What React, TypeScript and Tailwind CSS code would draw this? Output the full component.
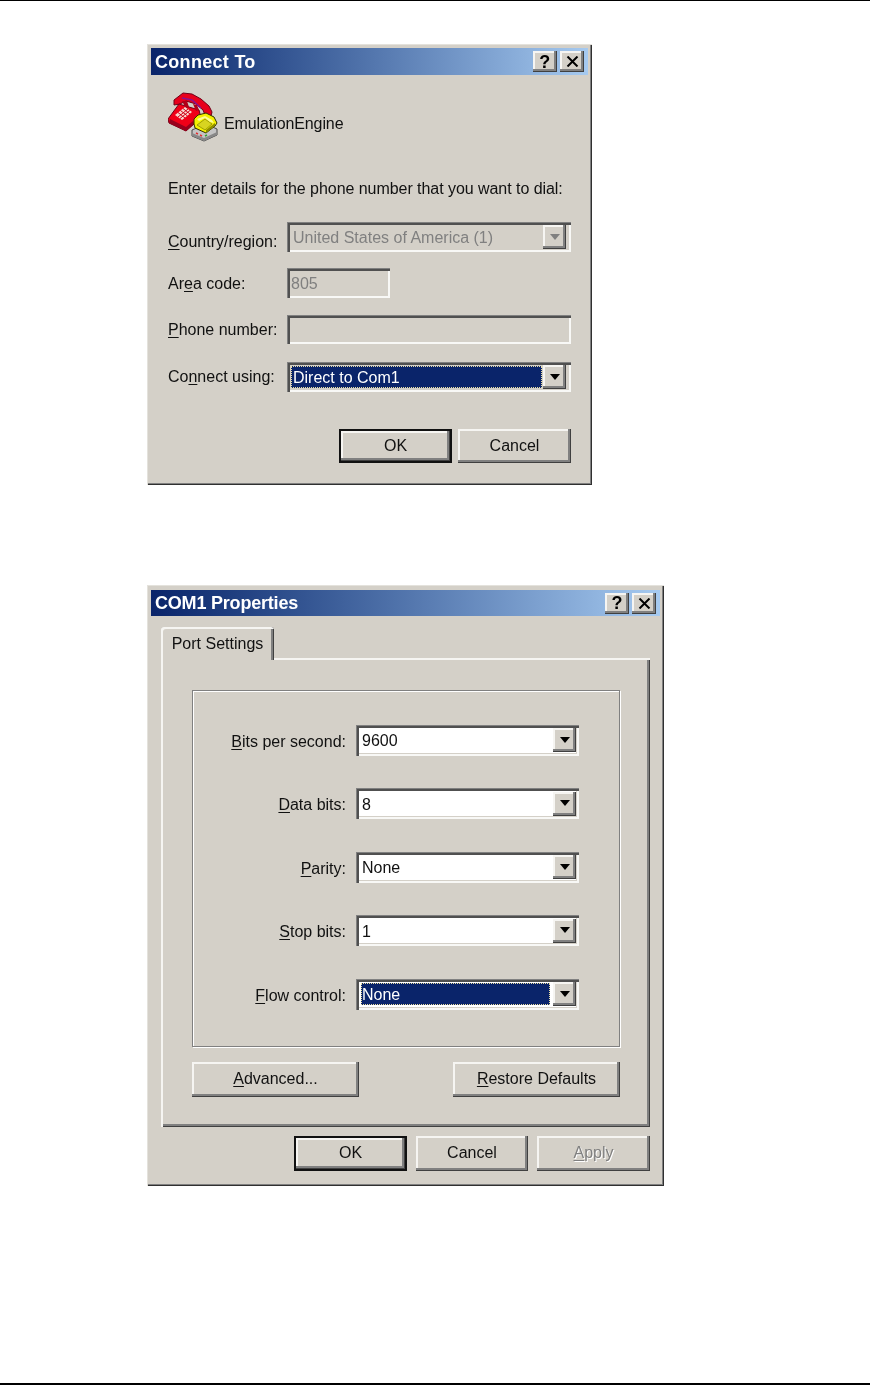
import type { ReactNode } from "react";

const FONT = "font-['Liberation_Sans',Arial,sans-serif]";
const RAISED =
  "shadow-[inset_-1px_-1px_0_#404040,inset_-3px_-3px_0_#808080,inset_2px_2px_0_#f6f5f2]";
const SUNKEN =
  "shadow-[inset_1px_1px_0_#808080,inset_3px_3px_0_#505050,inset_-2px_-2px_0_#f8f8f6,inset_-3px_-3px_0_#d4d0c8]";

function Key({ children }: { children: ReactNode }) {
  return <span className="underline underline-offset-2 decoration-1">{children}</span>;
}

function Arrow({ disabled }: { disabled?: boolean }) {
  return (
    <svg width="12" height="7" viewBox="0 0 12 7">
      <polygon points="1,0 11,0 6,6" fill={disabled ? "#808080" : "#000000"} />
    </svg>
  );
}

function DropButton({ disabled }: { disabled?: boolean }) {
  return (
    <div className={`flex h-[24px] w-[23px] shrink-0 items-center justify-center bg-[#d4d0c8] ${RAISED}`}>
      <Arrow disabled={disabled} />
    </div>
  );
}

function TitleBar({ title, className }: { title: string; className: string }) {
  return (
    <div className={`flex items-center justify-between bg-gradient-to-r from-[#0a246a] to-[#a6caf0] pl-[4px] pr-[4px] ${className}`}>
      <span className="whitespace-nowrap text-[18px] font-bold leading-none text-white">{title}</span>
      <div className="flex gap-[3px]">
        <div className={`flex h-[21px] w-[24px] items-center justify-center bg-[#d4d0c8] text-[18px] font-bold leading-none text-black ${RAISED}`}>
          ?
        </div>
        <div className={`flex h-[21px] w-[24px] items-center justify-center bg-[#d4d0c8] ${RAISED}`}>
          <svg width="13" height="11" viewBox="0 0 13 11">
            <path d="M1.5 0.5 L11.5 10.5 M11.5 0.5 L1.5 10.5" stroke="#000" strokeWidth="2" fill="none" />
          </svg>
        </div>
      </div>
    </div>
  );
}

function Button({
  children,
  isDefault,
  disabled,
  className,
}: {
  children: ReactNode;
  isDefault?: boolean;
  disabled?: boolean;
  className: string;
}) {
  return (
    <div
      className={`flex items-center justify-center bg-[#d4d0c8] text-[16px] ${RAISED} ${
        isDefault ? "border-2 border-[#111111]" : ""
      } ${disabled ? "text-[#808080] [text-shadow:1px_1px_0_#ffffff]" : "text-[#111111]"} ${className}`}
    >
      <span>{children}</span>
    </div>
  );
}

function PhoneIcon() {
  return (
    <svg width="50" height="50" viewBox="0 0 50 50" className="shrink-0">
      {/* red handset */}
      <path d="M6 13 L6 8 L15 1 L24 2 L33 7 L41 14 L44 20 L43 24 L37 23 L35 18 L28 12 L18 9 L12 12 Z" fill="#e8001c" stroke="#700018" strokeWidth="1" />
      <path d="M14 6 L24 8 L33 16" stroke="#8a1090" strokeWidth="1.5" fill="none" />
      {/* red body */}
      <path d="M0 27 L11 12 L31 18 L33 26 L26 32 L18 39 L1 31 Z" fill="#f00018" stroke="#700018" strokeWidth="1" />
      <path d="M1 31 L18 39 L26 32 L25 29 L18 35 L2 27 Z" fill="#98001c" />
      {/* cradle */}
      <path d="M14 9 L18 17 L21 15 L19 9 Z M25 12 L28 19 L31 18 L29 13 Z" fill="#b00018" />
      {/* keypad */}
      <path d="M7 23 L17 15 L24 20 L14 28 Z" fill="#f8d8d0" />
      <path d="M10 25 L20 17 M12 26.5 L22 18.500 M10 20.500 L17 26 M12.500 18.500 L19.500 24 M15 16.500 L22 22" stroke="#d00018" strokeWidth="1" fill="none" />
      {/* base */}
      <path d="M24 38 L38 32 L49 37 L49 43 L36 49 L24 44 Z" fill="#c4c4c4" stroke="#484848" strokeWidth="1" />
      <path d="M24 41 L36 46 L49 40 L49 43 L36 49 L24 44 Z" fill="#888888" />
      <path d="M28 41 l2 1 M32 43 l2 1" stroke="#e03030" strokeWidth="1.500" />
      <path d="M37 44 l2 -1" stroke="#30a030" strokeWidth="1.500" />
      {/* yellow phone */}
      <path d="M26 32 L26 27 L30 23 L38 21 L46 25 L49 31 L47 34 L38 41 L27 36 Z" fill="#f4f000" stroke="#303000" strokeWidth="1" />
      <path d="M29 33 L37 27 L44 32 L37 38 Z" fill="#d8d420" stroke="#808000" strokeWidth="0.700" />
      <path d="M29 27 L37 24 L44 28 L46 31 L42 30 L37 26 L31 29 Z" fill="#fcfc98" />
      <path d="M38 41 L47 34 L47 31 L38 38 Z" fill="#8c8c00" />
    </svg>
  );
}

function FieldRow({
  label,
  labelClass,
  children,
}: {
  label: ReactNode;
  labelClass?: string;
  children: ReactNode;
}) {
  return (
    <div className="flex items-center">
      <div className={`w-[119px] shrink-0 text-[16px] leading-none text-[#111111] ${labelClass ?? ""}`}>{label}</div>
      {children}
    </div>
  );
}

function ConnectTo() {
  return (
    <div className="h-[441px] w-[445px] bg-[#d4d0c8] pl-[4px] pr-[4px] pt-[4px] shadow-[inset_1px_1px_0_#e4e2dc,inset_-1px_-1px_0_#303030,inset_-2px_-2px_0_#808080]">
      <TitleBar title="Connect To" className="h-[27px] tracking-[0.3px]" />
      <div className="pl-[17px] pr-[17px]">
        <div className="mt-[17px] flex items-center gap-[6px]">
          <PhoneIcon />
          <span className="pt-[14px] text-[16px] tracking-[-0.1px] text-[#111111]">EmulationEngine</span>
        </div>
        <div className="mt-[37px] h-[20px] whitespace-nowrap text-[16px] leading-[20px] tracking-[-0.05px] text-[#111111]">
          Enter details for the phone number that you want to dial:
        </div>
        <div className="mt-[23px]">
          <FieldRow label={<><Key>C</Key>ountry/region:</>} labelClass="pt-[10px]">
            <div className={`flex h-[30px] w-[284px] items-center pl-[6px] pr-[5px] text-[16px] text-[#808080] ${SUNKEN}`}>
              <span className="flex-1 pt-[2px]">United States of America (1)</span>
              <DropButton disabled />
            </div>
          </FieldRow>
        </div>
        <div className="mt-[16px]">
          <FieldRow label={<>Ar<Key>e</Key>a code:</>} labelClass="pt-[2px]">
            <div className={`flex h-[30px] w-[103px] items-center pl-[4px] pt-[2px] text-[16px] text-[#808080] ${SUNKEN}`}>805</div>
          </FieldRow>
        </div>
        <div className="mt-[17px]">
          <FieldRow label={<><Key>P</Key>hone number:</>}>
            <div className={`h-[29px] w-[284px] ${SUNKEN}`} />
          </FieldRow>
        </div>
        <div className="mt-[18px]">
          <FieldRow label={<>Co<Key>n</Key>nect using:</>}>
            <div className={`flex h-[30px] w-[284px] items-center pl-[4px] pr-[5px] ${SUNKEN}`}>
              <div className="mr-[1px] flex h-[22px] flex-1 items-center border border-dotted border-[#e8dca0] bg-[#0a246a] pl-[1px] pt-[2px] text-[16px] text-white">
                Direct to Com1
              </div>
              <DropButton />
            </div>
          </FieldRow>
        </div>
        <div className="mt-[37px] flex justify-end gap-[6px]">
          <Button isDefault className="h-[34px] w-[113px]">OK</Button>
          <Button className="h-[34px] w-[113px]">Cancel</Button>
        </div>
      </div>
    </div>
  );
}

function PortRow({ label, value, selected }: { label: ReactNode; value: string; selected?: boolean }) {
  return (
    <div className="flex h-[30px] items-center justify-end gap-[10px]">
      <div className="pt-[3px] text-[16px] leading-none text-[#111111]">{label}</div>
      <div className={`flex h-[31px] w-[223px] items-center bg-white pl-[5px] pr-[3px] text-[16px] text-[#111111] ${SUNKEN}`}>
        {selected ? (
          <div className="mr-[3px] flex h-[22px] flex-1 items-center border border-dotted border-[#e8dca0] bg-[#0a246a] pt-[2px] text-white">
            {value}
          </div>
        ) : (
          <div className="flex-1 pl-[1px] pt-[2px]">{value}</div>
        )}
        <DropButton />
      </div>
    </div>
  );
}

function ComProperties() {
  return (
    <div className="h-[601px] w-[517px] bg-[#d4d0c8] pl-[4px] pr-[4px] pt-[5px] shadow-[inset_1px_1px_0_#e4e2dc,inset_-1px_-1px_0_#303030,inset_-2px_-2px_0_#808080]">
      <TitleBar title="COM1 Properties" className="h-[26px] tracking-[-0.2px]" />
      <div className="pl-[10px] pr-[10px] pt-[11px]">
        <div className="relative z-10 -mb-[2px] flex h-[33px] w-[113px] items-center justify-center rounded-t-[3px] bg-[#d4d0c8] text-[16px] text-[#111111] shadow-[inset_2px_2px_0_#f6f5f2,inset_-1px_0_0_#404040,inset_-3px_0_0_#808080]">
          Port Settings
        </div>
        <div className="h-[469px] w-[489px] pl-[31px] pt-[32px] shadow-[inset_2px_2px_0_#f6f5f2,inset_-1px_-1px_0_#404040,inset_-3px_-3px_0_#808080]">
          <div className="flex h-[357px] w-[428px] flex-col gap-[33.5px] border border-[#808080] pr-[40px] pt-[34px] shadow-[inset_1px_1px_0_#ffffff,1px_1px_0_#ffffff]">
            <PortRow label={<><Key>B</Key>its per second:</>} value="9600" />
            <PortRow label={<><Key>D</Key>ata bits:</>} value="8" />
            <PortRow label={<><Key>P</Key>arity:</>} value="None" />
            <PortRow label={<><Key>S</Key>top bits:</>} value="1" />
            <PortRow label={<><Key>F</Key>low control:</>} value="None" selected />
          </div>
          <div className="mt-[15px] flex w-[428px] justify-between">
            <Button className="h-[35px] w-[167px] pb-[2px]"><Key>A</Key>dvanced...</Button>
            <Button className="h-[35px] w-[167px] pb-[2px]"><Key>R</Key>estore Defaults</Button>
          </div>
        </div>
        <div className="mt-[9px] flex w-[489px] justify-end gap-[9px]">
          <Button isDefault className="h-[35px] w-[113px] pb-[2px]">OK</Button>
          <Button className="h-[35px] w-[112px] pb-[2px]">Cancel</Button>
          <Button disabled className="h-[35px] w-[113px] pb-[2px]"><Key>A</Key>pply</Button>
        </div>
      </div>
    </div>
  );
}

export default function App() {
  return (
    <div className={`flex min-h-[1385px] flex-col bg-white ${FONT}`}>
      <div className="h-px w-full bg-black" />
      <div className="ml-[147px] mt-[43px] blur-[0.3px]">
        <ConnectTo />
      </div>
      <div className="ml-[147px] mt-[100px] blur-[0.3px]">
        <ComProperties />
      </div>
      <div className="mt-auto h-[2px] w-full bg-black" />
    </div>
  );
}
